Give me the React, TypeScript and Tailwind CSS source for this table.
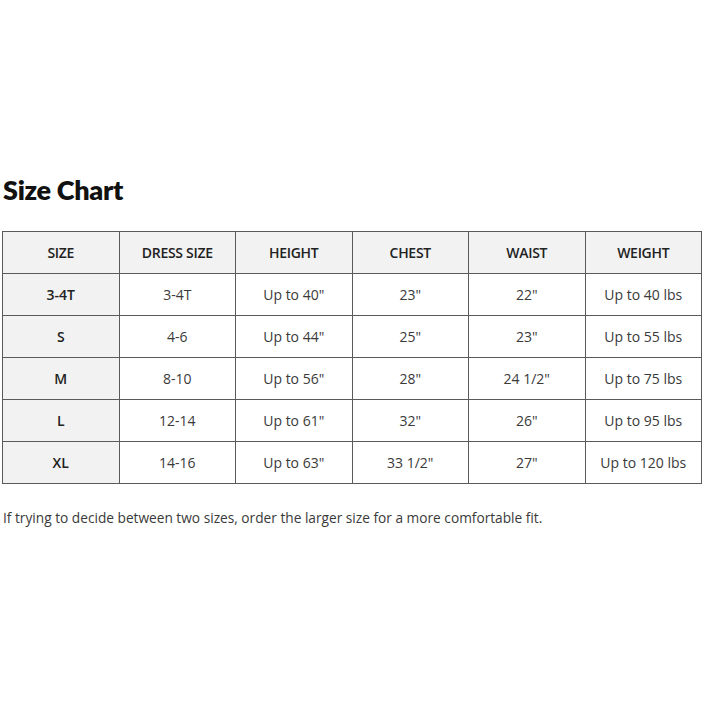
import React from "react";

const header = ["SIZE", "DRESS SIZE", "HEIGHT", "CHEST", "WAIST", "WEIGHT"];
const rows = [
  ["3-4T", "3-4T", "Up to 40\"", "23\"", "22\"", "Up to 40 lbs"],
  ["S", "4-6", "Up to 44\"", "25\"", "23\"", "Up to 55 lbs"],
  ["M", "8-10", "Up to 56\"", "28\"", "24 1/2\"", "Up to 75 lbs"],
  ["L", "12-14", "Up to 61\"", "32\"", "26\"", "Up to 95 lbs"],
  ["XL", "14-16", "Up to 63\"", "33 1/2\"", "27\"", "Up to 120 lbs"],
];

export default function App() {
  return (
    <div className="w-[704px] h-[704px] bg-white overflow-hidden" style={{ fontFamily: '"Open Sans", sans-serif' }}>
      <div className="pt-[173px] pl-[3px]">
        <h1 className="text-[27px] leading-[33px] font-extrabold text-[#111] tracking-[-0.3px]" style={{ fontFamily: 'Lato, sans-serif' }}>
          Size Chart
        </h1>
      </div>
      <div className="pt-[25px] pl-[2px]">
        <table className="border-collapse w-[700px] table-fixed">
          <thead>
            <tr className="h-[42px] bg-[#f2f2f2]">
              {header.map((h) => (
                <th key={h} className="border border-[#5a5a5a] text-[14px] font-semibold text-[#222] text-center p-0 tracking-[-0.3px]">
                  {h}
                </th>
              ))}
            </tr>
          </thead>
          <tbody>
            {rows.map((r) => (
              <tr key={r[0]} className="h-[42px]">
                {r.map((c, i) => (
                  <td
                    key={i}
                    className={
                      i === 0
                        ? "border border-[#5a5a5a] bg-[#f2f2f2] text-[14px] font-semibold text-[#222] text-center p-0"
                        : "border border-[#5a5a5a] text-[14px] text-[#3a3a3a] text-center p-0"
                    }
                  >
                    {c}
                  </td>
                ))}
              </tr>
            ))}
          </tbody>
        </table>
      </div>
      <p className="pt-[24px] pl-[3px] text-[13.7px] text-[#3a3a3a] leading-[20px]">
        If trying to decide between two sizes, order the larger size for a more comfortable fit.
      </p>
    </div>
  );
}
